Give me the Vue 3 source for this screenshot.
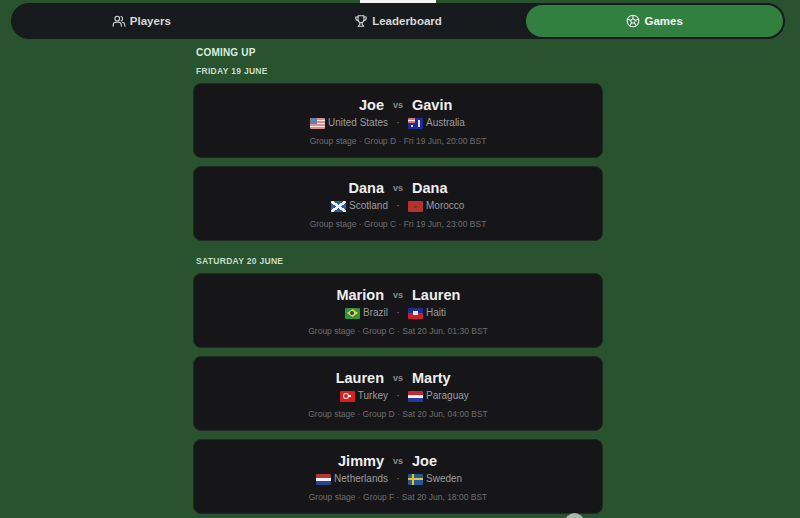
<template>
  <div class="page">
    <div class="top-notch"></div>

    <nav class="tabs">
      <div v-for="tab in tabs" :key="tab.name" :class="['tab', { active: tab.active }]">
        <svg v-if="tab.name === 'Players'" class="tab-icon" viewBox="0 0 24 24">
          <circle cx="9" cy="8" r="4" />
          <path d="M2 21v-2a5 5 0 0 1 5-5h4a5 5 0 0 1 5 5v2" />
          <path d="M15.5 4.2a4 4 0 0 1 0 7.6" />
          <path d="M18 14.2a5 5 0 0 1 4 4.8v2" />
        </svg>
        <svg v-else-if="tab.name === 'Leaderboard'" class="tab-icon" viewBox="0 0 24 24">
          <path d="M7 3h10v7a5 5 0 0 1-10 0z" />
          <path d="M7 5H3v2a4 4 0 0 0 4 4" />
          <path d="M17 5h4v2a4 4 0 0 1-4 4" />
          <path d="M10 15v3l-3 3h10l-3-3v-3" />
        </svg>
        <svg v-else class="tab-icon" viewBox="0 0 24 24">
          <circle cx="12" cy="12" r="10" />
          <path d="M12 8l4 2.9-1.5 4.6h-5L8 10.900z" />
          <path d="M12 8V2.500M16 10.900l5-1.800M14.500 15.500l3 4.500M9.500 15.500l-3 4.500M8 10.900l-5-1.800" />
        </svg>
        <span>{{ tab.name }}</span>
      </div>
    </nav>

    <main class="content">
      <h2 class="heading">COMING UP</h2>

      <section v-for="day in days" :key="day.title" class="day">
        <h3 class="day-title">{{ day.title }}</h3>
        <div v-for="game in day.games" :key="game.info" class="card">
          <div class="row names">
            <span class="left">{{ game.home }}</span>
            <span class="vs">vs</span>
            <span class="right">{{ game.away }}</span>
          </div>
          <div class="row teams">
            <span class="left team">
              <span class="flag" :class="'flag-' + game.homeFlag"><i></i><i></i><i></i></span>
              <span>{{ game.homeTeam }}</span>
            </span>
            <span class="dot">·</span>
            <span class="right team">
              <span class="flag" :class="'flag-' + game.awayFlag"><i></i><i></i><i></i></span>
              <span>{{ game.awayTeam }}</span>
            </span>
          </div>
          <p class="info">{{ game.info }}</p>
        </div>
      </section>
    </main>

    <div class="scroll-blob"></div>
  </div>
</template>

<script setup>
const tabs = [
  { name: 'Players' },
  { name: 'Leaderboard' },
  { name: 'Games', active: true }
]

const days = [
  {
    title: 'FRIDAY 19 JUNE',
    games: [
      { home: 'Joe', away: 'Gavin', homeTeam: 'United States', awayTeam: 'Australia', homeFlag: 'us', awayFlag: 'au', info: 'Group stage · Group D · Fri 19 Jun, 20:00 BST' },
      { home: 'Dana', away: 'Dana', homeTeam: 'Scotland', awayTeam: 'Morocco', homeFlag: 'sc', awayFlag: 'ma', info: 'Group stage · Group C · Fri 19 Jun, 23:00 BST' }
    ]
  },
  {
    title: 'SATURDAY 20 JUNE',
    games: [
      { home: 'Marion', away: 'Lauren', homeTeam: 'Brazil', awayTeam: 'Haiti', homeFlag: 'br', awayFlag: 'ht', info: 'Group stage · Group C · Sat 20 Jun, 01:30 BST' },
      { home: 'Lauren', away: 'Marty', homeTeam: 'Turkey', awayTeam: 'Paraguay', homeFlag: 'tr', awayFlag: 'py', info: 'Group stage · Group D · Sat 20 Jun, 04:00 BST' },
      { home: 'Jimmy', away: 'Joe', homeTeam: 'Netherlands', awayTeam: 'Sweden', homeFlag: 'nl', awayFlag: 'se', info: 'Group stage · Group F · Sat 20 Jun, 18:00 BST' }
    ]
  }
]
</script>

<style>
html, body {
  margin: 0;
  height: 100%;
  overflow: hidden;
  background: #29522f;
}
</style>

<style scoped>
.page {
  position: relative;
  height: 518px;
  overflow: hidden;
  background: #29522f;
  font-family: "Liberation Sans", Arial, sans-serif;
  padding-top: 3px;
  box-sizing: border-box;
}

.top-notch {
  position: absolute;
  top: 0;
  left: 360px;
  width: 76px;
  height: 3px;
  background: #f4f4f4;
}

/* top tabs */
.tabs {
  display: grid;
  grid-template-columns: repeat(3, 1fr);
  margin-left: 11px;
  width: 774px;
  height: 36px;
  box-sizing: border-box;
  padding: 2px;
  background: #181b1d;
  border-radius: 18px;
}

.tab {
  display: flex;
  align-items: center;
  justify-content: center;
  gap: 4px;
  padding-bottom: 1px;
  color: #d8d8d8;
  font-size: 11.500px;
  font-weight: 700;
  border-radius: 16px;
}

.tab.active {
  background: #318040;
  color: #f4f6f4;
}

.tab-icon {
  width: 14px;
  height: 14px;
  fill: none;
  stroke: currentColor;
  stroke-width: 1.800;
  stroke-linecap: round;
  stroke-linejoin: round;
}

/* list */
.content {
  width: 410px;
  margin: 0 auto;
  transform: translateX(-2px);
}

.heading {
  margin: 8px 0 0 3px;
  font-size: 10px;
  line-height: 12px;
  font-weight: 700;
  letter-spacing: 0.2px;
  color: #dcebdc;
}

.day-title {
  margin: 6px 0 6px 3px;
  font-size: 8.500px;
  line-height: 12px;
  font-weight: 700;
  letter-spacing: 0.3px;
  color: #c9dcc9;
}

.day + .day .day-title {
  margin-top: 14px;
}

.card {
  height: 75px;
  box-sizing: border-box;
  margin-bottom: 8px;
  padding-top: 13px;
  background: #161618;
  border: 1px solid #1f2a22;
  border-radius: 8px;
}

.row {
  display: grid;
  grid-template-columns: 1fr 28px 1fr;
  align-items: center;
}

.left {
  text-align: right;
}

.names {
  font-size: 14.500px;
  line-height: 16px;
  font-weight: 700;
  color: #eeeeee;
}

.vs {
  text-align: center;
  font-size: 9px;
  font-weight: 700;
  color: #8a8a8a;
}

.teams {
  margin-top: 3px;
  font-size: 10px;
  line-height: 14px;
  color: #9c9c9c;
  grid-template-columns: 1fr 20px 1fr;
}

.team {
  display: flex;
  align-items: center;
  gap: 3px;
}

.team.left {
  justify-content: flex-end;
}

.dot {
  text-align: center;
  color: #8d8d8d;
}

.flag {
  display: inline-flex;
  flex: none;
  width: 15px;
  height: 11px;
  border-radius: 1px;
  overflow: hidden;
  position: relative;
  flex-direction: column;
}

.flag i {
  flex: 1;
  display: block;
}

.flag-us {
  background: repeating-linear-gradient(#d9908f 0 1.500px, #f1e4e2 1.500px 3px);
}
.flag-us i:first-child {
  position: absolute;
  width: 7px;
  height: 6px;
  background: #6a7fa8;
}

.flag-au {
  background: #1c2a9a;
}
.flag-au i:first-child {
  position: absolute;
  width: 7px;
  height: 5px;
  background: linear-gradient(#d77 0 2px, #eee 2px 3px, #d77 3px);
}
.flag-au i:nth-child(2) {
  position: absolute;
  left: 10px;
  top: 2px;
  width: 2px;
  height: 7px;
  background: #ddd;
}
.flag-au i:nth-child(3) {
  position: absolute;
  left: 3px;
  top: 7px;
  width: 2px;
  height: 2px;
  background: #ddd;
}

.flag-sc {
  background:
    linear-gradient(35deg, transparent 42%, #f2f2f2 42% 58%, transparent 58%),
    linear-gradient(-35deg, transparent 42%, #f2f2f2 42% 58%, transparent 58%),
    #2a5fb0;
}

.flag-ma {
  background: #b5322f;
}
.flag-ma i:first-child {
  position: absolute;
  left: 6px;
  top: 4px;
  width: 3px;
  height: 3px;
  background: #7a3b28;
  border-radius: 50%;
}

.flag-br {
  background: #2f9440;
}
.flag-br i:first-child {
  position: absolute;
  left: 2px;
  top: 1.500px;
  width: 11px;
  height: 8px;
  background: #e9d52e;
  clip-path: polygon(50% 0, 100% 50%, 50% 100%, 0 50%);
}
.flag-br i:nth-child(2) {
  position: absolute;
  left: 5.500px;
  top: 3.500px;
  width: 4px;
  height: 4px;
  border-radius: 50%;
  background: #23408f;
}

.flag-ht {
  background: linear-gradient(#1c2f8f 50%, #c8202f 50%);
}
.flag-ht i:first-child {
  position: absolute;
  left: 5px;
  top: 3.500px;
  width: 5px;
  height: 4px;
  background: #e6e6e6;
}

.flag-tr {
  background: #d9201f;
}
.flag-tr i:first-child {
  position: absolute;
  left: 3px;
  top: 2.500px;
  width: 6px;
  height: 6px;
  border-radius: 50%;
  background: #f5f5f5;
}
.flag-tr i:nth-child(2) {
  position: absolute;
  left: 4.500px;
  top: 3.500px;
  width: 4px;
  height: 4px;
  border-radius: 50%;
  background: #d9201f;
}
.flag-tr i:nth-child(3) {
  position: absolute;
  left: 9px;
  top: 4.500px;
  width: 2px;
  height: 2px;
  background: #f5f5f5;
}

.flag-py {
  background: linear-gradient(#c8242c 0 33%, #f2f2f2 33% 67%, #2338a0 67%);
}

.flag-nl {
  background: linear-gradient(#b8362f 0 33%, #f2f2f2 33% 67%, #27458c 67%);
}

.flag-se {
  background:
    linear-gradient(#e8c22a, #e8c22a) 0 50% / 100% 2px no-repeat,
    linear-gradient(#e8c22a, #e8c22a) 4px 0 / 2px 100% no-repeat,
    #22589c;
}

.info {
  margin: 5px 0 0;
  text-align: center;
  font-size: 8.500px;
  line-height: 12px;
  color: #6e6e6e;
}

.scroll-blob {
  position: absolute;
  left: 565px;
  top: 513px;
  width: 19px;
  height: 19px;
  border-radius: 50%;
  background: #a7b8aa;
}
</style>
